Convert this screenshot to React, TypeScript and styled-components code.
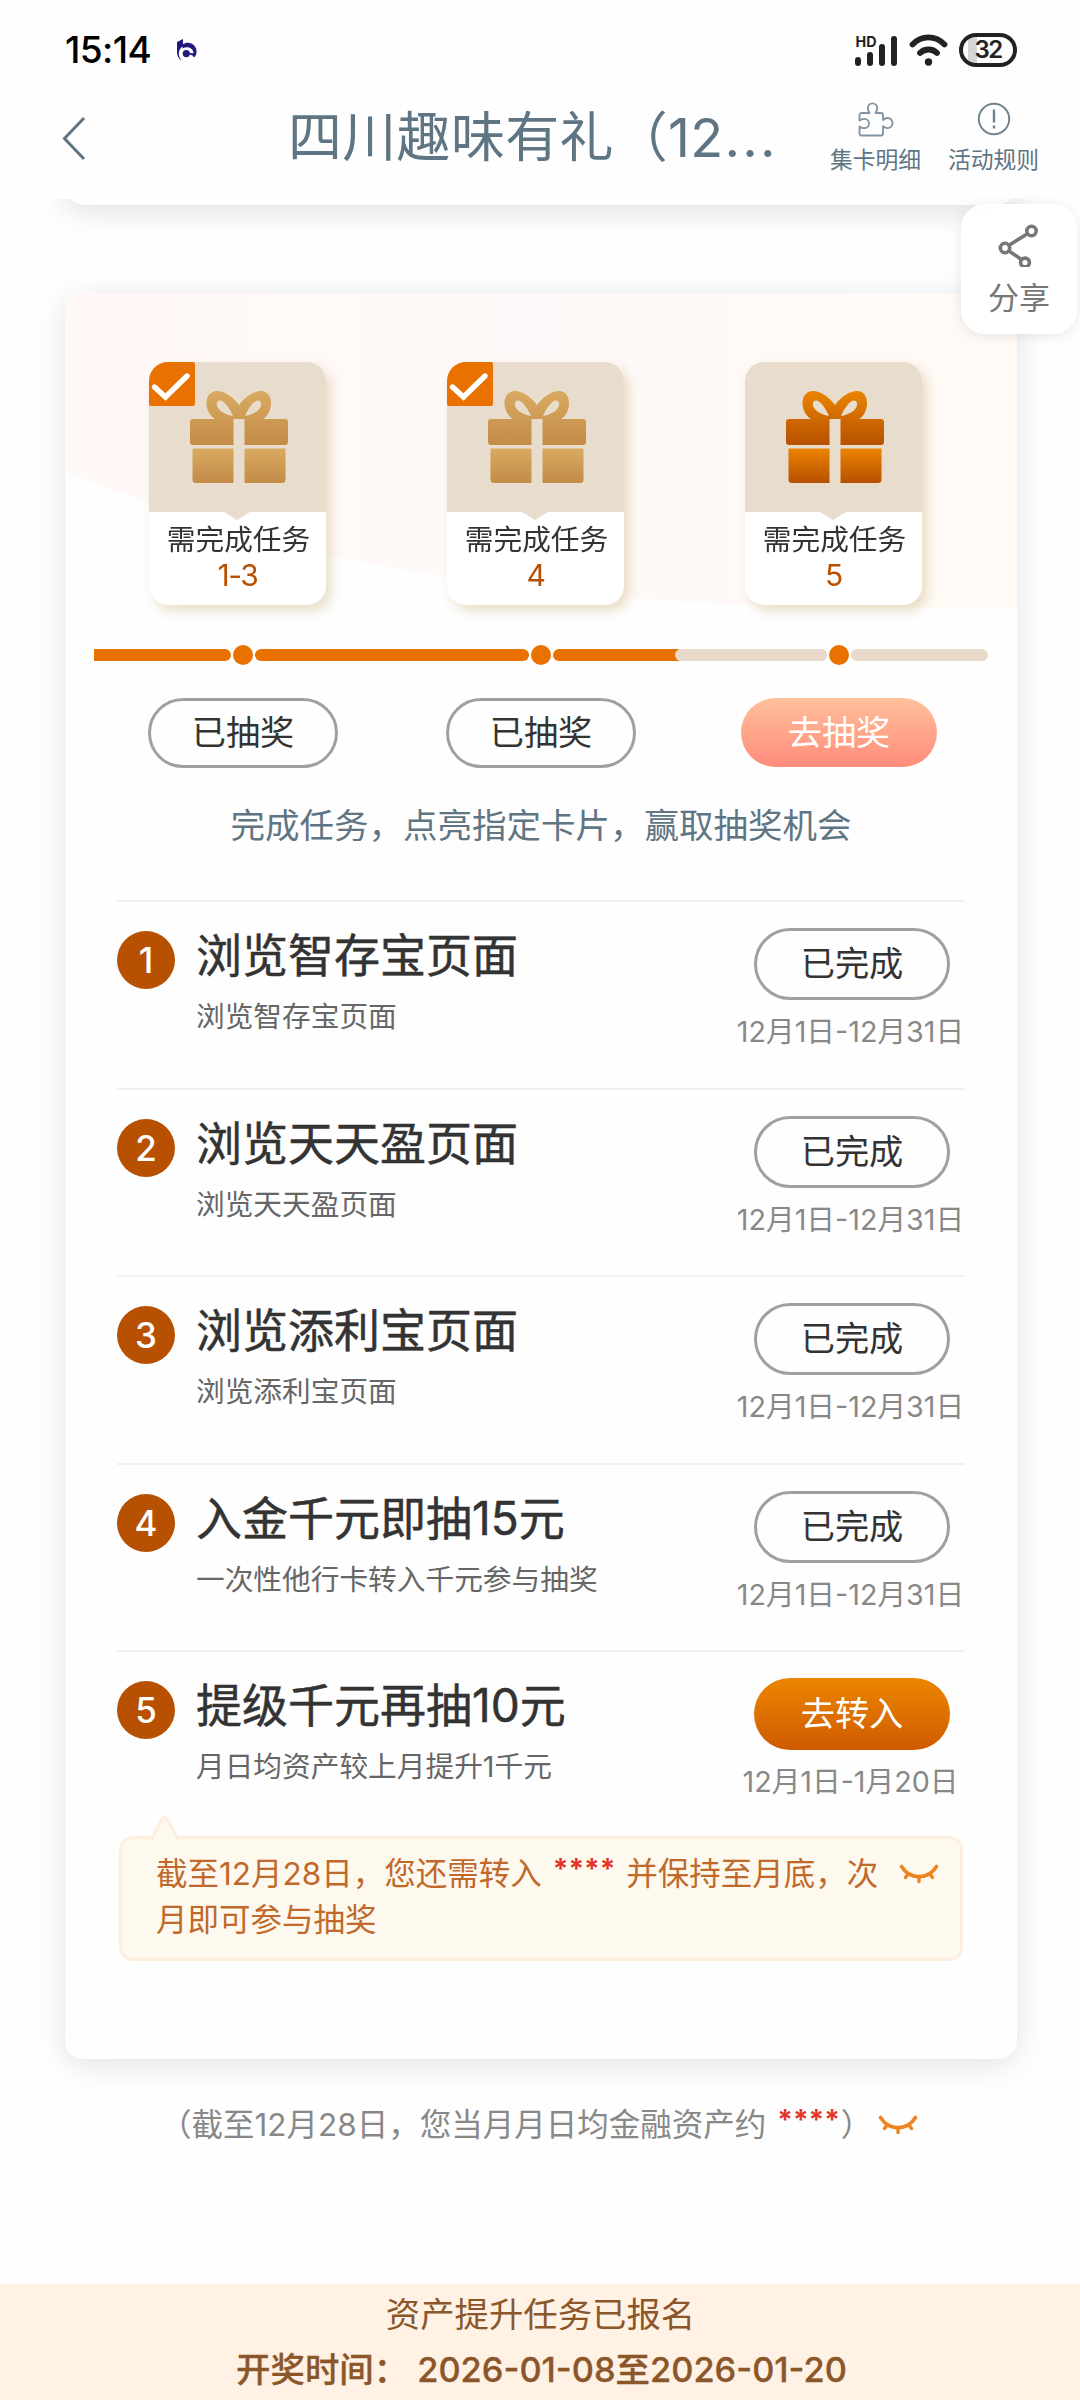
import React from 'react';
import styled, { createGlobalStyle } from 'styled-components';

const GlobalStyle = createGlobalStyle`
  * { box-sizing: border-box; }
  body {
    margin: 0;
    background: #fefefe;
    font-family: Inter, "Noto Sans CJK SC", sans-serif;
    color: #333;
  }
`;

const Page = styled.div`
  position: relative;
  width: 1080px;
  height: 2400px;
  display: flex;
  flex-direction: column;
  overflow: hidden;
  background: #fefefe;
`;

const Top = styled.div`
  position: relative;
  z-index: 2;
  flex: none;
  height: 199px;
  background: #fefefe;
`;

const StatusBar = styled.div`
  display: flex;
  align-items: center;
  height: 99px;
  padding: 0 63px 0 65px;
`;

const Clock = styled.span`
  width: 112px;
  font-size: 37px;
  font-weight: 500;
  letter-spacing: -0.6px;
  white-space: nowrap;
  color: #000;
`;

const StatusIcons = styled.div`
  display: flex;
  align-items: center;
  gap: 11px;
  margin-left: auto;
`;

const Battery = styled.div`
  display: flex;
  align-items: center;
  justify-content: center;
  width: 58px;
  height: 34px;
  border: 4px solid #222;
  border-radius: 17px;
  background: linear-gradient(90deg, #fefefe 5px, #d5d5d5 5px, #d5d5d5 14px, #fefefe 14px);
  font-size: 24px;
  font-weight: 600;
  letter-spacing: -1.6px;
  color: #222;
`;

const NavBar = styled.div`
  display: flex;
  height: 100px;
  padding-left: 60px;
`;

const BackIcon = styled.svg`
  flex: none;
  width: 28px;
  height: 46px;
  margin-top: 16px;
`;

const Title = styled.h1`
  width: 510px;
  margin: 0 0 0 200px;
  font-size: 54px;
  font-weight: 400;
  line-height: 78px;
  letter-spacing: 0.3px;
  white-space: nowrap;
  color: #5f7583;
`;

const Ellipsis = styled.span`
  margin-left: 1px;
  letter-spacing: 2.2px;
`;

const NavActions = styled.div`
  display: flex;
  gap: 27px;
  margin-left: 32px;
`;

const NavAction = styled.div`
  display: flex;
  flex-direction: column;
  align-items: center;
  width: 91px;
  font-size: 22.8px;
  line-height: 30px;
  white-space: nowrap;
  color: #5f7583;
  svg { margin: 1px 0 7px; }
`;

const PreviousCard = styled.div`
  flex: none;
  height: 60px;
  margin: -54px 63px 88px 65px;
  border-radius: 20px;
  background: #fefefe;
  box-shadow: 0 6px 30px rgba(0, 0, 0, 0.12);
`;

const ShareButton = styled.div`
  position: absolute;
  z-index: 3;
  top: 204px;
  right: 3px;
  display: flex;
  flex-direction: column;
  align-items: center;
  width: 116px;
  height: 130px;
  padding-top: 17px;
  border-radius: 24px;
  background: rgba(255, 255, 255, 0.94);
  box-shadow: 0 2px 14px rgba(0, 0, 0, 0.09);
  font-size: 31px;
  line-height: 40px;
  color: #777;
  svg { margin-bottom: 11px; }
`;

const Card = styled.section`
  position: relative;
  flex: none;
  height: 1766px;
  margin: 0 63px 0 65px;
  padding-top: 69px;
  border-radius: 18px;
  background: #fefefe;
  box-shadow: 0 6px 30px rgba(0, 0, 0, 0.11);
`;

const Backdrop = styled.svg`
  position: absolute;
  top: 0;
  left: 0;
  border-radius: 18px 18px 0 0;
`;

const Columns = styled.div`
  position: relative;
  display: grid;
  grid-template-columns: repeat(3, 298px);
  padding-left: 29px;
`;

const GiftCard = styled.div`
  position: relative;
  width: 177px;
  height: 243px;
  margin-left: 54.5px;
  overflow: hidden;
  border-radius: 19px;
  background: #fff;
`;

const GiftShadow = styled.div`
  filter: drop-shadow(5px 6px 6px rgba(210, 186, 135, 0.46));
`;

const GiftTop = styled.div`
  display: flex;
  justify-content: center;
  height: 150px;
  padding: 28px 0 0 4px;
  background: #e8dccd;
`;

const Notch = styled.div`
  width: 26px;
  height: 8px;
  margin: 0 auto;
  background: #e8dccd;
  clip-path: polygon(0 0, 100% 0, 50% 100%);
`;

const CheckBadge = styled.svg`
  position: absolute;
  top: 0;
  left: 0;
`;

const GiftLabel = styled.div`
  padding-left: 3px;
  text-align: center;
  font-size: 28.7px;
  line-height: 40px;
  white-space: nowrap;
`;

const GiftTask = styled.div`
  padding-left: 1px;
  text-align: center;
  font-size: 30px;
  line-height: 30px;
  letter-spacing: -1.4px;
  color: #b75000;
`;

const Progress = styled.div`
  position: relative;
  display: flex;
  align-items: center;
  height: 20px;
  margin: 40px 29px 0;
`;

const Segment = styled.div<{ $w: number; $done?: boolean; $first?: boolean }>`
  flex: none;
  width: ${p => p.$w}px;
  height: 12px;
  border-radius: ${p => (p.$first ? '0 6px 6px 0' : '6px')};
  background: ${p => (p.$done ? '#e97100' : '#e9dacb')};
`;

const PartialSegment = styled(Segment)`
  background: linear-gradient(90deg, #e97100 126px, #e9dacb 126px);
  padding-left: 122px;
`;

const Remaining = styled.div`
  height: 12px;
  border-radius: 6px;
  background: #e9dacb;
`;

const Dot = styled.div`
  flex: none;
  width: 20px;
  height: 20px;
  margin: 0 2px;
  border-radius: 50%;
  background: #e97100;
`;

const Pill = styled.div<{ $w: number; $h: number; $fill?: string }>`
  display: flex;
  align-items: center;
  justify-content: center;
  width: ${p => p.$w}px;
  height: ${p => p.$h}px;
  padding-top: 1px;
  border: ${p => (p.$fill ? 'none' : '3px solid #a0a0a0')};
  border-radius: 36px;
  background: ${p => p.$fill ?? '#fefefe'};
  font-size: 34.2px;
  line-height: 1;
  color: ${p => (p.$fill ? '#fff' : '#333')};
`;

const DrawButtons = styled(Columns)`
  justify-items: center;
  height: 70px;
  margin-top: 33px;
`;

const Hint = styled.p`
  margin: 33px 0 49px;
  text-align: center;
  font-size: 34.5px;
  line-height: 50px;
  color: #5f7583;
`;

const TaskRow = styled.div`
  display: flex;
  align-items: flex-start;
  height: 187.5px;
  margin: 0 52px;
  border-top: 2px solid #f1f1f1;
  &:last-of-type { height: 186px; }
`;

const Index = styled.div`
  display: flex;
  align-items: center;
  justify-content: center;
  width: 58px;
  height: 58px;
  margin-top: 29px;
  border-radius: 50%;
  background: #b75000;
  font-size: 35px;
  font-weight: 500;
  color: #fff;
`;

const TaskText = styled.div`
  margin: 23px 0 0 21px;
`;

const TaskTitle = styled.h2`
  margin: 0;
  font-size: 46px;
  font-weight: 400;
  line-height: 60px;
  -webkit-text-stroke: 0.5px #333;
`;

const TaskDetail = styled.p`
  margin: 12px 0 0;
  font-size: 28.7px;
  line-height: 40px;
  color: #666;
`;

const TaskSide = styled.div`
  display: flex;
  flex-direction: column;
  align-items: center;
  width: 226px;
  margin: 26px 0 0 auto;
`;

const TaskDate = styled.div`
  margin: 12px 3px 0 0;
  font-size: 28.7px;
  line-height: 40px;
  white-space: nowrap;
  color: #888;
`;

const Tip = styled.div`
  position: relative;
  display: flex;
  width: 844px;
  height: 125px;
  margin-left: 54px;
  padding: 12px 0 0 34px;
  border: 3px solid #fdeedd;
  border-radius: 14px;
  background: #fef9ee;
  font-size: 31.5px;
  line-height: 46px;
  color: #c0692b;
`;

const TipArrow = styled.svg`
  position: absolute;
  top: -25px;
  left: 26px;
`;

const TipText = styled.div`
  width: 743px;
  white-space: nowrap;
`;

const Masked = styled.b<{ $after: number }>`
  margin: 0 ${p => p.$after}px 0 11px;
  font-size: 28px;
  font-weight: 700;
  line-height: 1;
  vertical-align: 6px;
  color: #e2352b;
`;

const EyeIcon = styled.svg`
  flex: none;
  width: 40px;
  height: 20px;
  margin-top: 13px;
`;

const Notice = styled.div`
  display: flex;
  gap: 6px;
  margin: 43px 0 0 160px;
  font-size: 31.5px;
  line-height: 46px;
  white-space: nowrap;
  color: #888;
`;

const Footer = styled.footer`
  height: 116px;
  margin-top: auto;
  padding: 3px 0 0 1px;
  background: #fff1e3;
  text-align: center;
  font-size: 34.4px;
  line-height: 55px;
  color: #8b572a;
`;

const DrawTime = styled.div`
  padding-left: 2px;
  font-weight: 500;
  white-space: pre;
  -webkit-text-stroke: 0.3px #8b572a;
`;

function BrandMark() {
  return (
    <svg width="20" height="22" viewBox="0 0 20 22" fill="#1f1a7c">
      <path d="M0 3 L6 0 V7 C3 9 1.6 12 1.8 15 C2 18 3 20 5 21.3 C2 20.5 0 17 0 13Z" />
      <path d="M5.5 5.5 C12 1 20 6 19.5 13 C19.4 15.500 18.500 17.300 17 18.500 L15.500 16.500 L12.500 15.500 V14 L16.500 14.300 C16.500 9 10.500 6.500 5.500 9.500Z" />
      <circle cx="9.300" cy="14.600" r="3.600" />
    </svg>
  );
}

function Signal() {
  return (
    <svg width="43" height="34" viewBox="0 -2 43 34">
      <g stroke="#222" strokeWidth="6" strokeLinecap="round">
        <path d="M3 25v3M15 20v8M27 12v16M39 4v24" />
      </g>
      <text x="0.500" y="12" fontSize="14.500" fontWeight="700" textLength="21" lengthAdjust="spacingAndGlyphs" fill="#222">HD</text>
    </svg>
  );
}

function Wifi() {
  return (
    <svg width="39" height="32" viewBox="0 0 39 32" fill="none" stroke="#222" strokeWidth="5.800" strokeLinecap="round">
      <path d="M3.500 10.500 C12.500 1 26.500 1 35.500 10.500" />
      <path d="M11 19 C15.500 14.300 23.500 14.300 28 19" />
      <circle cx="19.500" cy="28" r="3.700" fill="#222" stroke="none" />
    </svg>
  );
}

function Puzzle() {
  return (
    <svg width="38" height="38" viewBox="0 0 38 38" fill="none" stroke="#8492a0" strokeWidth="1.800" strokeLinejoin="round">
      <path d="M4.500 13 H12.500 c-1.200-1.800-1.700-3-1.700-5 a4.700 4.700 0 0 1 9.400 0 c0 2-.5 3.200-1.700 5 H24 a2 2 0 0 1 2 2 V20 c1.200-1.200 2.600-2 4.500-2 a5 5 0 0 1 0 10.200 c-1.900 0-3.300-.8-4.500-2 V33.500 a2 2 0 0 1-2 2 H4.500 a2 2 0 0 1-2-2 V26.500 c1.500 1.200 3 1.700 4.800 1.700 a4.700 4.700 0 0 0 0-9.400 c-1.800 0-3.300.5-4.800 1.700 V15 a2 2 0 0 1 2-2Z" />
    </svg>
  );
}

function Info() {
  return (
    <svg width="38" height="38" viewBox="0 0 38 38" fill="none" stroke="#71828f" strokeWidth="1.900">
      <circle cx="19" cy="19" r="15.200" />
      <path d="M19 9.500v13M19 25.500v3" strokeWidth="2.400" />
    </svg>
  );
}

function Share() {
  return (
    <svg width="42" height="46" viewBox="0 0 42 46" fill="none" stroke="#777" strokeWidth="3.600">
      <circle cx="33.500" cy="10" r="4.700" />
      <circle cx="7" cy="27" r="4.700" />
      <circle cx="27" cy="41.500" r="4.400" />
      <path d="M11 24.300 29.500 12.700M11 30 23.500 38.500" />
    </svg>
  );
}

function Gift({ id, pale }: { id: string; pale: boolean }) {
  const [from, to] = pale ? ['#d9aa61', '#c38b48'] : ['#ea8300', '#b65000'];
  return (
    <svg width="98" height="94" viewBox="0 0 98 94">
      <defs>
        <linearGradient id={`${id}-lid`} gradientUnits="userSpaceOnUse" x1="0" y1="2" x2="0" y2="55">
          <stop offset="0" stopColor={from} />
          <stop offset="1" stopColor={to} />
        </linearGradient>
        <linearGradient id={`${id}-box`} gradientUnits="userSpaceOnUse" x1="0" y1="59" x2="0" y2="93">
          <stop offset="0" stopColor={from} />
          <stop offset="1" stopColor={to} />
        </linearGradient>
      </defs>
      <g fill={`url(#${id}-lid)`} fillRule="evenodd">
        <path d="M49 15 C42 6 34 1 27 1 C20 1 16.500 7 16.500 13 C16.500 20 20 26 25 29 H73 C78 26 81 20 81 13 C81 7 78 1 71 1 C64 1 56 6 49 15Z M43 26 C39 17 34 10.500 30 10.500 C27 10.500 26 14 27.500 17 C30 22 36 24.500 43 26Z M55 26 C59 17 64 10.500 68 10.500 C71 10.500 72 14 70.500 17 C68 22 62 24.500 55 26Z" />
        <path d="M3 29 H43.500 V55 H3 a3 3 0 0 1-3-3 V32 a3 3 0 0 1 3-3Z M54.500 29 H95 a3 3 0 0 1 3 3 V52 a3 3 0 0 1-3 3 H54.500Z" />
      </g>
      <path fill={`url(#${id}-box)`} d="M2.500 58.500 H43.500 V93 H6 a3.500 3.500 0 0 1-3.500-3.500Z M54.500 58.500 H95.500 V89.500 a3.500 3.500 0 0 1-3.500 3.500 H54.500Z" />
    </svg>
  );
}

function ClosedEye() {
  return (
    <EyeIcon viewBox="0 0 40 20" fill="none" stroke="#ee8420" strokeLinecap="round">
      <path d="M2.500 2.500 C11 16 29 16 37.500 2.500" strokeWidth="3.600" />
      <path d="M9 10 6.500 13.500M20 13.500v4M31 10l2.500 3.500" strokeWidth="3.400" />
    </EyeIcon>
  );
}

const gifts = [
  { task: '1-3', done: true },
  { task: '4', done: true },
  { task: '5', done: false },
];

const tasks = [
  { title: '浏览智存宝页面', detail: '浏览智存宝页面', date: '12月1日-12月31日', done: true },
  { title: '浏览天天盈页面', detail: '浏览天天盈页面', date: '12月1日-12月31日', done: true },
  { title: '浏览添利宝页面', detail: '浏览添利宝页面', date: '12月1日-12月31日', done: true },
  { title: '入金千元即抽15元', detail: '一次性他行卡转入千元参与抽奖', date: '12月1日-12月31日', done: true },
  { title: '提级千元再抽10元', detail: '月日均资产较上月提升1千元', date: '12月1日-1月20日', done: false },
];

export default function App() {
  return (
    <Page>
      <GlobalStyle />
      <Top>
        <StatusBar>
          <Clock>15:14</Clock>
          <BrandMark />
          <StatusIcons>
            <Signal />
            <Wifi />
            <Battery>32</Battery>
          </StatusIcons>
        </StatusBar>
        <NavBar>
          <BackIcon viewBox="0 0 28 46" fill="none" stroke="#5f7583" strokeWidth="3">
            <path d="M24 3 4.500 23.500 24 44" />
          </BackIcon>
          <Title>四川趣味有礼（12<Ellipsis>...</Ellipsis></Title>
          <NavActions>
            <NavAction><Puzzle />集卡明细</NavAction>
            <NavAction><Info />活动规则</NavAction>
          </NavActions>
        </NavBar>
      </Top>
      <PreviousCard />
      <ShareButton><Share />分享</ShareButton>

      <Card>
        <Backdrop width="952" height="330" viewBox="0 0 952 330">
          <defs>
            <linearGradient id="backdrop">
              <stop offset="0" stopColor="#fff8f7" />
              <stop offset="0.500" stopColor="#fef9f8" />
              <stop offset="1" stopColor="#fffaf5" />
            </linearGradient>
          </defs>
          <path d="M0 0H952V316C700 312 350 325 0 178Z" fill="url(#backdrop)" />
        </Backdrop>
        <Columns>
          {gifts.map(g => (
            <GiftShadow key={g.task}>
              <GiftCard>
                <GiftTop><Gift id={`gift${g.task}`} pale={g.done} /></GiftTop>
                <Notch />
                <GiftLabel>需完成任务</GiftLabel>
                <GiftTask>{g.task}</GiftTask>
                {g.done && (
                  <CheckBadge width="46" height="44" viewBox="0 0 46 44">
                    <path d="M0 0H44a2 2 0 0 1 2 2V42a2 2 0 0 1-2 2H2a2 2 0 0 1-2-2Z" fill="#e97100" />
                    <path d="M5.500 25 16.500 35 38 14" fill="none" stroke="#fff" strokeWidth="5.400" strokeLinecap="round" />
                  </CheckBadge>
                )}
              </GiftCard>
            </GiftShadow>
          ))}
        </Columns>
        <Progress>
          <Segment $w={137} $done $first />
          <Dot />
          <Segment $w={274} $done />
          <Dot />
          <PartialSegment $w={274}><Remaining /></PartialSegment>
          <Dot />
          <Segment $w={137} />
        </Progress>
        <DrawButtons>
          <Pill $w={190} $h={70}>已抽奖</Pill>
          <Pill $w={190} $h={70}>已抽奖</Pill>
          <Pill $w={196} $h={69} $fill="linear-gradient(#ffc09a, #ff8c7b)">去抽奖</Pill>
        </DrawButtons>
        <Hint>完成任务，点亮指定卡片，赢取抽奖机会</Hint>
        <div>
          {tasks.map((t, i) => (
            <TaskRow key={t.title}>
              <Index>{i + 1}</Index>
              <TaskText>
                <TaskTitle>{t.title}</TaskTitle>
                <TaskDetail>{t.detail}</TaskDetail>
              </TaskText>
              <TaskSide>
                <Pill $w={196} $h={72} $fill={t.done ? undefined : 'linear-gradient(#ec8500, #ce5b00)'}>
                  {t.done ? '已完成' : '去转入'}
                </Pill>
                <TaskDate>{t.date}</TaskDate>
              </TaskSide>
            </TaskRow>
          ))}
        </div>
        <Tip>
          <TipArrow width="34" height="28" viewBox="0 0 34 28">
            <path d="M3 26 14 5Q16.500 1 19 5L30 26" fill="#fef9ee" stroke="#fdeedd" strokeWidth="3" />
          </TipArrow>
          <TipText>
            截至12月28日，您还需转入<Masked $after={11}>****</Masked>并保持至月底，次<br />月即可参与抽奖
          </TipText>
          <ClosedEye />
        </Tip>
      </Card>

      <Notice>
        <span>（截至12月28日，您当月月日均金融资产约<Masked $after={1}>****</Masked>）</span>
        <ClosedEye />
      </Notice>

      <Footer>
        <div>资产提升任务已报名</div>
        <DrawTime>开奖时间： 2026-01-08至2026-01-20</DrawTime>
      </Footer>
    </Page>
  );
}
